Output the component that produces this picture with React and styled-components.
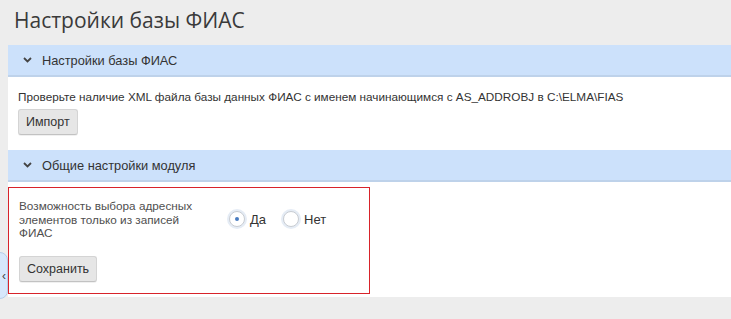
import React from "react";
import styled, { createGlobalStyle } from "styled-components";

const GlobalStyle = createGlobalStyle`
  html, body {
    margin: 0;
    padding: 0;
    background: #ededed;
  }
  body {
    font-family: "Liberation Sans", Arial, sans-serif;
    color: #333;
  }
`;

const Page = styled.div`
  position: relative;
  width: 731px;
  height: 319px;
  overflow: hidden;
  background: #ededed;
`;

const Title = styled.h1`
  margin: 0;
  height: 45px;
  padding: 5px 0 0 14px;
  box-sizing: border-box;
  font-family: "Open Sans", sans-serif;
  font-weight: 400;
  font-size: 21px;
  line-height: 30px;
  color: #3a3a3a;
`;

const Panel = styled.div`
  margin-left: 8px;
  background: #fff;
  padding-bottom: 3px;
`;

const SectionHeader = styled.div`
  display: flex;
  align-items: center;
  gap: 10px;
  height: 30px;
  padding-left: 15px;
  background: #cce1fb;
  border-bottom: 2px solid #bed2ea;
  font-size: 12.8px;
  color: #333;
`;

const Chevron = () => (
  <svg width="9" height="6" viewBox="0 0 9 6">
    <path d="M1 1l3.5 3.5L8 1" fill="none" stroke="#444" strokeWidth="1.8" />
  </svg>
);

const Content = styled.div`
  padding: 12px 10px 15px;
  font-size: 11.75px;
  line-height: 16px;
  color: #333;
`;

const Button = styled.button`
  display: inline-block;
  height: 26px;
  padding: 0 7px;
  margin-top: ${(p) => p.$top || 0}px;
  font-family: "Liberation Sans", Arial, sans-serif;
  font-size: 12.5px;
  color: #333;
  background: #e6e6e6;
  border: 1px solid #d4d4d4;
  border-bottom-color: #c2c2c2;
  border-radius: 3px;
  box-shadow: 0 1px 0 rgba(0, 0, 0, 0.06);
  cursor: pointer;
`;

const Highlight = styled.div`
  margin-top: 5px;
  width: 362px;
  box-sizing: border-box;
  border: 1px solid #d8232a;
  padding: 11px 10px 11px;
`;

const FieldRow = styled.div`
  display: flex;
  align-items: center;
`;

const Label = styled.div`
  width: 186px;
  font-size: 11.75px;
  line-height: 13.5px;
  color: #4f4f4f;
`;

const Radios = styled.div`
  display: flex;
  align-items: center;
  margin-left: 24px;
  gap: 17px;
`;

const RadioLabel = styled.label`
  display: flex;
  align-items: center;
  gap: 5px;
  font-size: 13px;
  color: #333;
`;

const RadioCircle = styled.span`
  position: relative;
  width: 14px;
  height: 14px;
  border-radius: 50%;
  background: #fff;
  border: 1px solid #c8ccd2;
  box-shadow: 0 0 0 2px #e5ecf5;
  &::after {
    content: "";
    display: ${(p) => (p.$checked ? "block" : "none")};
    position: absolute;
    left: 5px;
    top: 5px;
    width: 4px;
    height: 4px;
    border-radius: 50%;
    background: #4a7cc0;
  }
`;

const SideTab = styled.div`
  position: absolute;
  left: -11px;
  top: 252px;
  width: 16px;
  height: 45px;
  background: #d7e7fb;
  border: 1px solid #b6cde9;
  border-radius: 8px;
  display: flex;
  align-items: center;
  justify-content: flex-end;
  padding-right: 1px;
  font-size: 12px;
  color: #444;
`;

export default function App() {
  return (
    <>
      <GlobalStyle />
      <Page>
        <Title>Настройки базы ФИАС</Title>
        <Panel>
          <SectionHeader>
            <Chevron />
            Настройки базы ФИАС
          </SectionHeader>
          <Content>
            <div>
              Проверьте наличие XML файла базы данных ФИАС с именем начинающимся с
              AS_ADDROBJ в C:\ELMA\FIAS
            </div>
            <Button $top={4}>Импорт</Button>
          </Content>
          <SectionHeader>
            <Chevron />
            Общие настройки модуля
          </SectionHeader>
          <Highlight>
            <FieldRow>
              <Label>Возможность выбора адресных элементов только из записей ФИАС</Label>
              <Radios>
                <RadioLabel>
                  <RadioCircle $checked />
                  Да
                </RadioLabel>
                <RadioLabel>
                  <RadioCircle />
                  Нет
                </RadioLabel>
              </Radios>
            </FieldRow>
            <Button $top={16}>Сохранить</Button>
          </Highlight>
        </Panel>
        <SideTab>‹</SideTab>
      </Page>
    </>
  );
}
